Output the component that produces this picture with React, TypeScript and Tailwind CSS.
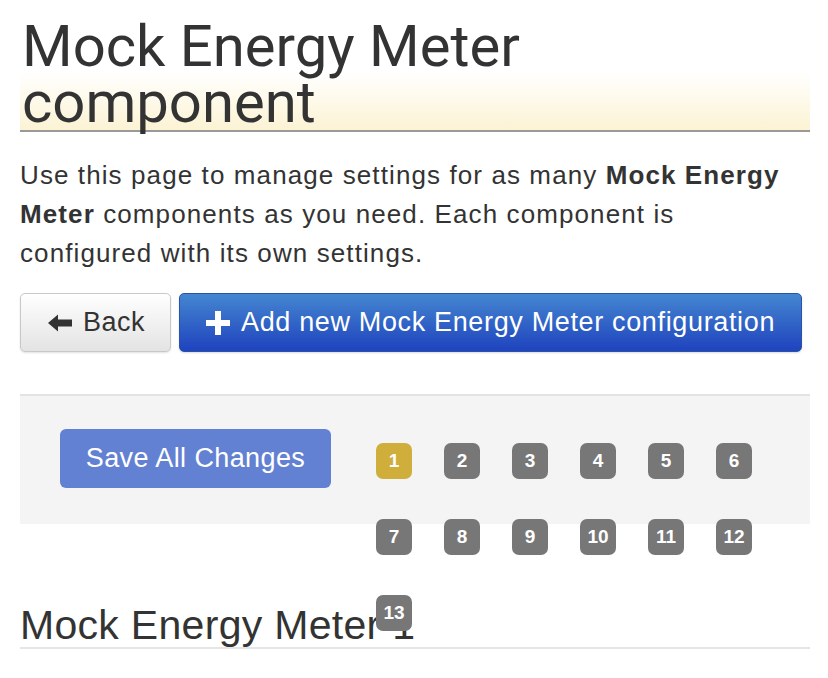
import React from "react";

const badges = Array.from({ length: 13 }, (_, i) => i + 1);

const ArrowLeft = () => (
  <svg width="25" height="18" viewBox="0 0 25 18" className="shrink-0">
    <path d="M0 9 L10 0.5 V5.5 H24 V12.5 H10 V17.5 Z" fill="#333" />
  </svg>
);

const Plus = () => (
  <svg width="24" height="24" viewBox="0 0 24 24" className="shrink-0">
    <path d="M9 0 H15 V9 H24 V15 H15 V24 H9 V15 H0 V9 H9 Z" fill="#fff" />
  </svg>
);

export default function App() {
  return (
    <div className="min-h-[678px] bg-white text-[#333] font-['Liberation_Sans',Arial,sans-serif]">
      <div className="ml-5 w-[790px]">
        {/* Page title */}
        <h1 className="mt-[18px] border-b-2 border-[#999] bg-[linear-gradient(to_bottom,#fff_48%,#fcf3d4)] pl-[2px] font-['Roboto',sans-serif] text-[58px] font-normal leading-[56px] text-[#333]">
          Mock Energy Meter
          <br />
          component
        </h1>

        <p className="mt-6 text-[26px] leading-[39px] tracking-[1.1px]">
          Use this page to manage settings for as many <b>Mock Energy Meter</b> components as you need. Each
          component is configured with its own settings.
        </p>

        {/* Actions */}
        <div className="mt-5 flex gap-2">
          <button className="flex h-[59px] w-[151px] items-center gap-[10px] rounded-[5px] border border-[#c8c8c8] bg-[linear-gradient(to_bottom,#fff,#e3e3e3)] pl-[27px] text-[27px] tracking-[0.5px] text-[#333] shadow-[0_1px_2px_rgba(0,0,0,0.12)]">
            <ArrowLeft />
            <span>Back</span>
          </button>
          <button className="flex h-[59px] w-[623px] items-center gap-[11px] rounded-[5px] border border-[#2a52a8] bg-[linear-gradient(to_bottom,#4486d0,#1f43be)] pl-[26px] text-[27px] tracking-[0.65px] text-white shadow-[0_1px_2px_rgba(0,0,0,0.15)]">
            <Plus />
            <span>Add new Mock Energy Meter configuration</span>
          </button>
        </div>

        {/* Save panel + pagination badges */}
        <div className="mt-[42px] flex h-[130px] items-start border-t-2 border-[#e3e3e3] bg-[#f4f4f4] pl-10 pt-[33px]">
          <button className="h-[59px] w-[271px] shrink-0 rounded-[6px] bg-[#6381d2] text-[27px] tracking-[0.4px] text-white">
            Save All Changes
          </button>
          <div className="ml-[45px] mt-[14px] flex w-[376px] flex-wrap gap-x-8 gap-y-10">
            {badges.map((n) => (
              <span
                key={n}
                className={`relative flex h-9 w-9 items-center justify-center rounded-[7px] text-[19px] font-bold text-white ${
                  n === 1 ? "bg-[#cfae3c]" : "bg-[#777]"
                }`}
              >
                {n}
              </span>
            ))}
          </div>
        </div>

        <h2 className="mt-[80px] border-b-2 border-[#e5e5e5] text-[41px] font-normal leading-[43px] tracking-[0.3px] text-[#333]">
          Mock Energy Meter 1
        </h2>
      </div>
    </div>
  );
}
